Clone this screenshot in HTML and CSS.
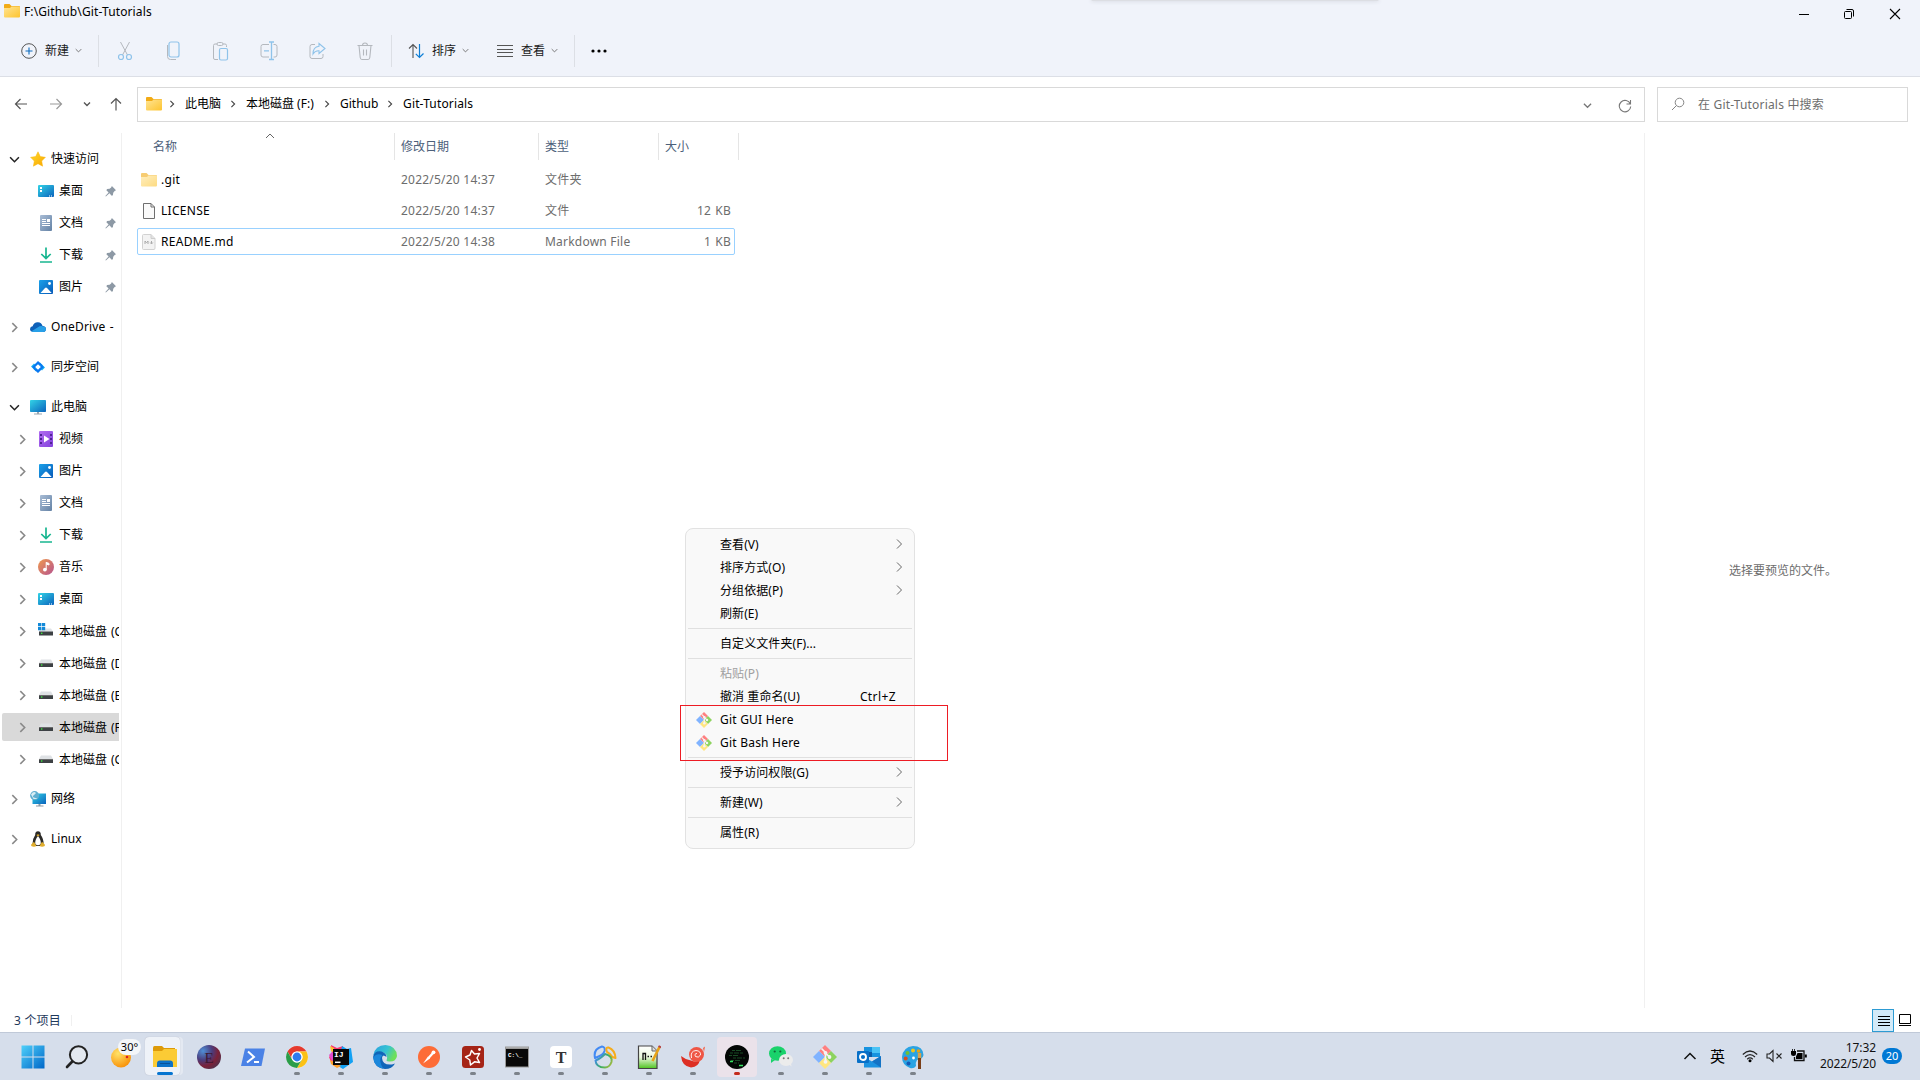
FILE: index.html
```html
<!DOCTYPE html>
<html lang="zh-CN">
<head>
<meta charset="utf-8">
<title>F:\Github\Git-Tutorials</title>
<link rel="stylesheet" href="styles.css">
</head>
<body>
<svg class="defs" width="0" height="0" aria-hidden="true">
  <defs>
    <linearGradient id="gFolder" x1="0" y1="0" x2="1" y2="1"><stop offset="0" stop-color="#ffe494"/><stop offset="1" stop-color="#fdc42f"/></linearGradient>
    <linearGradient id="gBlue" x1="0" y1="0" x2="1" y2="1"><stop offset="0" stop-color="#33d3e6"/><stop offset="1" stop-color="#0a63bd"/></linearGradient>
    <linearGradient id="gDoc" x1="0" y1="0" x2="1" y2="1"><stop offset="0" stop-color="#a9bdd6"/><stop offset="1" stop-color="#6482a5"/></linearGradient>
    <linearGradient id="gPic" x1="0" y1="0" x2="1" y2="1"><stop offset="0" stop-color="#1ba2ea"/><stop offset="1" stop-color="#0759b8"/></linearGradient>
    <linearGradient id="gVid" x1="0" y1="0" x2="1" y2="1"><stop offset="0" stop-color="#b26df0"/><stop offset="1" stop-color="#8241dc"/></linearGradient>
    <linearGradient id="gMus" x1="0" y1="0" x2="1" y2="1"><stop offset="0" stop-color="#f09a4e"/><stop offset="1" stop-color="#b5538f"/></linearGradient>
    <linearGradient id="gStar" x1="0" y1="0" x2="1" y2="1"><stop offset="0" stop-color="#ffdc2e"/><stop offset="1" stop-color="#f9a400"/></linearGradient>
    <linearGradient id="gWin" x1="0" y1="0" x2="1" y2="1"><stop offset="0" stop-color="#4fd0fa"/><stop offset="1" stop-color="#0067c8"/></linearGradient>
    <linearGradient id="gEdge" x1="0" y1="0" x2="1" y2=".4"><stop offset="0" stop-color="#2a9fe0"/><stop offset=".6" stop-color="#35c3d2"/><stop offset="1" stop-color="#6ee05a"/></linearGradient>
    <linearGradient id="gGreen" x1="0" y1="0" x2="0" y2="1"><stop offset="0" stop-color="#fff"/><stop offset=".5" stop-color="#eaf8dc"/><stop offset="1" stop-color="#4fc421"/></linearGradient>
    <linearGradient id="gNav" gradientUnits="userSpaceOnUse" x1="3" y1="12" x2="19" y2="22"><stop offset="0" stop-color="#438af3"/><stop offset=".5" stop-color="#3aae5e"/><stop offset="1" stop-color="#b5bd3c"/></linearGradient>
    <radialGradient id="gSun" cx=".35" cy=".3" r=".8"><stop offset="0" stop-color="#ffe36a"/><stop offset="1" stop-color="#f88a00"/></radialGradient>
    <radialGradient id="gBall" cx=".25" cy=".25" r=".85"><stop offset="0" stop-color="#4f8fd6"/><stop offset=".45" stop-color="#4b3c7c"/><stop offset=".75" stop-color="#7b2037"/><stop offset="1" stop-color="#54304a"/></radialGradient>

    <symbol id="folder" viewBox="0 0 16 16"><path d="M0 2Q0 1 1 1H5.5L7.5 3H15Q16 3 16 4V8H0Z" fill="#f2ab16"/><path d="M0 5H6L7.5 3.5H15.2Q16 3.5 16 4.5V13.4Q16 14.5 15 14.5H1Q0 14.5 0 13.4Z" fill="url(#gFolder)"/></symbol>
    <symbol id="star" viewBox="0 0 16 16"><path d="M8 .8 10.3 5.6 15.4 6.3 11.7 10 12.6 15.2 8 12.7 3.4 15.2 4.3 10 .6 6.3 5.7 5.6Z" fill="url(#gStar)" stroke="#f9b50b" stroke-width=".5"/></symbol>
    <symbol id="desktop" viewBox="0 0 16 16"><rect y="2" width="16" height="12" rx="1" fill="url(#gBlue)"/><path d="M2 4h2v2H2zM2 7h2v2H2zM11 12.4h1v1h-1zM13 12.4h1v1h-1z" fill="#fff"/></symbol>
    <symbol id="doc" viewBox="0 0 16 16"><rect x="2" width="12" height="16" rx="1" fill="url(#gDoc)"/><path d="M4 4.500h4M4 6.500h4M4 8.500h8M4 10.500h8" stroke="#fff"/><rect x="9" y="4" width="3" height="3" fill="#fff"/></symbol>
    <symbol id="down" viewBox="0 0 16 16"><path d="M8 .5V11M3.300 7 8 11.500 12.700 7M2 15H14" fill="none" stroke="#18b690" stroke-width="1.700"/></symbol>
    <symbol id="pic" viewBox="0 0 16 16"><rect x="1" y="1" width="14" height="14" rx="1" fill="url(#gPic)"/><path d="M2.500 14 7 8.900Q8 8 9 8.900L13.700 14Z" fill="#fff"/><circle cx="11.500" cy="4.500" r="1.400" fill="#fff"/></symbol>
    <symbol id="cloud" viewBox="0 0 16 16"><path d="M2.800 12.800Q0 12.500 0 10 .2 7.600 2.600 7.300 4 3 8 3.200 11.500 3.500 12.600 7 16 7.200 16 10.200 15.700 13 13 13Z" fill="#0d60b8"/><path d="M3 13 1.500 12.300 9.600 7.200Q12 6.500 13 7.500 16 7.700 16 10.300 15.700 13 13 13Z" fill="#28a0e8"/></symbol>
    <symbol id="sync" viewBox="0 0 16 16"><path d="M1 7.500 4 4.500 8 8.500 6 12.500ZM15 8.500 12 11.500 8 7.500 10 3.500Z" fill="#18b9f5"/><path d="M8 2 13 6.500 8 6.500 4.500 10 2 8ZM8 14 3 9.500 8 9.500 11.500 6 14 8Z" fill="#0a78f0"/><path d="M8 5.200 10.800 8 8 10.800 5.200 8Z" fill="#fff"/></symbol>
    <symbol id="pc" viewBox="0 0 16 16"><rect y="1" width="16" height="12" rx=".8" fill="url(#gBlue)"/><path d="M7 13h2v1.500h3v1H4v-1h3z" fill="#9aa6b0"/></symbol>
    <symbol id="video" viewBox="0 0 16 16"><rect x="1" width="14" height="16" rx="1" fill="url(#gVid)"/><path d="M2 3h2v2H2zM2 7h2v2H2zM2 11h2v2H2zM12 3h2v2h-2zM12 7h2v2h-2zM12 11h2v2h-2z" fill="#502495"/><path d="M6 4.500V11.500L11.500 8Z" fill="#fff"/></symbol>
    <symbol id="music" viewBox="0 0 16 16"><circle cx="8" cy="8" r="8" fill="url(#gMus)"/><path d="M8.200 3.200V10.500M8.200 3.400 11 4.400V6L8.200 5" fill="#fff" stroke="#fff"/><circle cx="6.900" cy="10.600" r="1.900" fill="#fff"/></symbol>
    <symbol id="drive" viewBox="0 0 16 16"><path d="M3 4.500H13L15 8H1Z" fill="#dfe2e5"/><rect x="1" y="8" width="14" height="4" fill="#3d4144"/><rect x="1" y="8" width="14" height=".8" fill="#777"/><rect x="3" y="9.300" width="1.400" height="1.400" fill="#39e53c"/></symbol>
    <symbol id="sysdrive" viewBox="0 0 16 16"><path d="M3 5.500H13L15 8.500H1Z" fill="#dfe2e5"/><rect x="1" y="8.500" width="14" height="4" fill="#3d4144"/><rect x="3" y="9.600" width="1.400" height="1.400" fill="#39e53c"/><path d="M0 0H3.300V3.300H0ZM3.900 0H7.200V3.300H3.900ZM0 3.900H3.300V7.200H0ZM3.900 3.900H7.200V7.200H3.900Z" fill="#1289d8"/></symbol>
    <symbol id="net" viewBox="0 0 16 16"><rect x="2.500" y="2.500" width="13.500" height="10.500" fill="url(#gBlue)"/><path d="M8.500 13h2v1.500h3v1H6v-1h2.500z" fill="#8c9aa6"/><circle cx="4.600" cy="4.600" r="4.500" fill="#5faed0"/><path d="M1 3.500Q3 .5 5 1.200T4 4 5.500 7 3.500 8Z" fill="#d8edf3"/></symbol>
    <symbol id="tux" viewBox="0 0 16 16"><path d="M8 .3Q11 .3 10.800 4 13.800 8 13.500 13L10 15H6L2.500 13Q2.300 8 5.200 4 5 .3 8 .3Z" fill="#2b2a28"/><path d="M8 5Q11.300 9 10.700 13 8 15.500 5.300 13 4.700 9 8 5Z" fill="#fff"/><path d="M6.300 4 8 3.200 9.700 4 8 5.600ZM1.200 13.500 4 10.700 6.500 15Q4 16.500 1.200 15ZM14.800 13.500 12 10.700 9.500 15Q12 16.500 14.800 15Z" fill="#e0ad2c"/></symbol>
    <symbol id="pin" viewBox="0 0 12 12"><path d="M7.500 0 12 4.500 10.500 5.500 9 7.300 8.600 10 7.300 10.500 4.800 8 1 11.500 .4 10.900 3.900 7.100 1.500 4.700 2.200 3.400 5 3 6.700 1.500Z" fill="#8d99a5"/></symbol>
    <symbol id="cR" viewBox="0 0 10 10"><path d="M3 1 7 5 3 9" fill="none" stroke="currentColor" stroke-width="1.400"/></symbol>
    <symbol id="cM" viewBox="0 0 10 10"><path d="M3 .5 7.500 5 3 9.500" fill="none" stroke="currentColor"/></symbol>
    <symbol id="cD" viewBox="0 0 10 10"><path d="M1 3 5 7 9 3" fill="none" stroke="currentColor" stroke-width="1.400"/></symbol>
    <symbol id="file" viewBox="0 0 16 16"><path d="M2.500 .5H10L13.500 4V15.500H2.500Z" fill="#fafafa" stroke="#6f6f6f"/><path d="M10 .5V4H13.500" fill="none" stroke="#6f6f6f"/></symbol>
    <symbol id="md" viewBox="0 0 16 16"><path d="M2.500 .5H10L14 4.500V14Q14 15.500 13 15.500H2.500Q1.500 15.500 1.500 14.500V1.500Q1.500 .5 2.500 .5Z" fill="#f3f3f3" stroke="#d2d2d2"/><path d="M10 .5V4.500H14" fill="#e2e2e2" stroke="#cdcdcd"/><path d="M4 10V7L5.500 8.700 7 7V10M10.500 7V9.700M9.200 8.500 10.500 10 11.800 8.500" fill="none" stroke="#aaa"/></symbol>
    <symbol id="git" viewBox="0 0 24 24"><path d="M12 0 18 6 12 12 6 6Z" fill="#ff8080"/><path d="M6 6 12 12 6 18 0 12Z" fill="#80b3ff"/><path d="M18 6 24 12 18 18 12 12Z" fill="#8dd35f"/><path d="M12 12 18 18 12 24 6 18Z" fill="#ffe680"/><path d="M8.500 3.500 12.500 7.500V17M12.500 8 16.500 12" stroke="#f4f4f4" stroke-width="1.700" fill="none"/><circle cx="12.500" cy="7.800" r="1.900" fill="#f4f4f4"/><circle cx="16.500" cy="12" r="1.900" fill="#f4f4f4"/><circle cx="12.500" cy="16.800" r="1.900" fill="#f4f4f4"/></symbol>
  </defs>
</svg>

<header class="titlebar">
  <div class="title">
    <svg class="i16"><use href="#folder"/></svg><span class="title-text">F:\Github\Git-Tutorials</span>
    <div class="edge-flyout"></div>
    <div class="winctl">
      <svg viewBox="0 0 12 12"><path d="M1 6.500H11" stroke="#000"/></svg>
      <svg viewBox="0 0 12 12"><rect x="1.500" y="3.500" width="7" height="7" rx="1" fill="none" stroke="#000"/><path d="M3.500 1.500H9Q10.500 1.500 10.500 3V8.500" fill="none" stroke="#000"/></svg>
      <svg viewBox="0 0 12 12"><path d="M1 1 11 11M11 1 1 11" stroke="#000" stroke-width="1.100"/></svg>
    </div>
  </div>
  <nav class="toolbar">
    <button class="tb new"><svg class="i16" viewBox="0 0 16 16"><circle cx="8" cy="8" r="7.300" fill="none" stroke="#555"/><path d="M8 4.500V11.500M4.500 8H11.500" stroke="#0f6cbd" stroke-width="1.100"/></svg><span>新建</span><svg class="i7"><use href="#cD"/></svg></button>
    <i class="vsep"></i>
    <div class="tb-icons">
      <svg viewBox="0 0 20 20"><path d="M5.500 1 12.500 14M14.500 1 7.500 14" stroke="#b4b8be" fill="none"/><circle cx="6" cy="16" r="2.500" fill="none" stroke="#8fc3ea" stroke-width="1.200"/><circle cx="14" cy="16" r="2.500" fill="none" stroke="#8fc3ea" stroke-width="1.200"/></svg>
      <svg viewBox="0 0 20 20"><rect x="6" y="1" width="10" height="15" rx="2" fill="none" stroke="#8fc3ea" stroke-width="1.200"/><path d="M4.500 4V15.500Q4.500 18.500 7.500 18.500H13" fill="none" stroke="#b4b8be"/></svg>
      <svg viewBox="0 0 20 20"><path d="M6 3H4Q2.500 3 2.500 4.500V17Q2.500 18.500 4 18.500H7M12 3H14Q15.500 3 15.500 4.500V6" fill="none" stroke="#b4b8be"/><rect x="6" y="1.500" width="6" height="3" rx="1.500" fill="none" stroke="#b4b8be"/><rect x="8.500" y="7.500" width="8" height="11.500" rx="1.500" fill="none" stroke="#8fc3ea" stroke-width="1.200"/></svg>
      <svg viewBox="0 0 20 20"><path d="M10 3.500H4Q2 3.500 2 5.500V14Q2 16 4 16H10M14.500 3.500H16Q18 3.500 18 5.500V14Q18 16 16 16H14.500" fill="none" stroke="#b4b8be"/><path d="M12.500 1V18.500M10 1H15M10 18.500H15M5 9.800H10" stroke="#8fc3ea" stroke-width="1.300"/></svg>
      <svg viewBox="0 0 20 20"><path d="M8 3.500H5Q3 3.500 3 5.500V15.500Q3 17.500 5 17.500H14Q16 17.500 16 15.500V13" fill="none" stroke="#b4b8be"/><path d="M12 2.500 18 7.500 12 12.500V9.800Q8 9.500 6 13 6 6 12 5.300Z" fill="none" stroke="#8fc3ea" stroke-width="1.100"/></svg>
      <svg viewBox="0 0 20 20"><path d="M2.500 4.500H17.500M7.500 4.500Q7.500 2 10 2T12.500 4.500M4 4.500 5.200 16.500Q5.500 18.500 7 18.500H13Q14.500 18.500 14.800 16.500L16 4.500M8.500 8.500V14.500M11.500 8.500V14.500" fill="none" stroke="#b4b8be" stroke-width="1.100"/></svg>
    </div>
    <i class="vsep"></i>
    <button class="tb sort"><svg class="i16" viewBox="0 0 16 16"><path d="M5 15V1.500M1 5.500 5 1.500 9 5.500" fill="none" stroke="#555" stroke-width="1.100"/><path d="M11.500 1V14.500M7.800 10.800 11.500 14.500 15.500 10.500" fill="none" stroke="#0f7fd6" stroke-width="1.200"/></svg><span>排序</span><svg class="i7"><use href="#cD"/></svg></button>
    <button class="tb view"><svg class="i16" viewBox="0 0 16 16"><path d="M0 2.500H16M0 6.500H16M0 9.500H16M0 13.500H16" stroke="#555"/></svg><span>查看</span><svg class="i7"><use href="#cD"/></svg></button>
    <i class="vsep"></i>
    <svg class="more" viewBox="0 0 16 4"><circle cx="2" cy="2" r="1.600"/><circle cx="8" cy="2" r="1.600"/><circle cx="14" cy="2" r="1.600"/></svg>
  </nav>
</header>

<div class="addressrow">
  <div class="navbtns">
    <svg viewBox="0 0 14 14"><path d="M13 7H1.500M6.500 2 1.500 7 6.500 12" fill="none" stroke="#555" stroke-width="1.200"/></svg>
    <svg viewBox="0 0 14 14"><path d="M1 7H12.500M7.500 2 12.500 7 7.500 12" fill="none" stroke="#999" stroke-width="1.200"/></svg>
    <svg class="sm" viewBox="0 0 10 10"><path d="M2 3.500 5 6.500 8 3.500" fill="none" stroke="#555" stroke-width="1.400"/></svg>
    <svg viewBox="0 0 14 14"><path d="M7 13.500V1.500M2 6.500 7 1.500 12 6.500" fill="none" stroke="#555" stroke-width="1.200"/></svg>
  </div>
  <div class="address">
    <svg class="i16"><use href="#folder"/></svg>
    <svg class="sep"><use href="#cR"/></svg><span class="c1">此电脑</span>
    <svg class="sep"><use href="#cR"/></svg><span class="c2">本地磁盘 (F:)</span>
    <svg class="sep"><use href="#cR"/></svg><span class="c3">Github</span>
    <svg class="sep"><use href="#cR"/></svg><span class="c4">Git-Tutorials</span>
    <svg class="drop"><use href="#cD"/></svg>
    <svg class="refresh" viewBox="0 0 14 14"><path d="M12.300 5A5.700 5.700 0 1 0 12.700 7.500M12.500 1V5H8.500" fill="none" stroke="#777" stroke-width="1.100"/></svg>
  </div>
  <div class="search">
    <svg viewBox="0 0 14 14"><circle cx="8.500" cy="5.500" r="4.300" fill="none" stroke="#858585"/><path d="M5.500 8.500 1 13" stroke="#858585"/></svg>
    <span>在 Git-Tutorials 中搜索</span>
  </div>
</div>

<main class="main">
  <aside class="side">
    <div class="group">
      <div class="n"><svg class="ch open"><use href="#cD"/></svg><svg class="i16"><use href="#star"/></svg><span>快速访问</span></div>
      <div class="n sub"><svg class="ch"></svg><svg class="i16"><use href="#desktop"/></svg><span>桌面</span><svg class="pin"><use href="#pin"/></svg></div>
      <div class="n sub"><svg class="ch"></svg><svg class="i16"><use href="#doc"/></svg><span>文档</span><svg class="pin"><use href="#pin"/></svg></div>
      <div class="n sub"><svg class="ch"></svg><svg class="i16"><use href="#down"/></svg><span>下载</span><svg class="pin"><use href="#pin"/></svg></div>
      <div class="n sub"><svg class="ch"></svg><svg class="i16"><use href="#pic"/></svg><span>图片</span><svg class="pin"><use href="#pin"/></svg></div>
    </div>
    <div class="group"><div class="n"><svg class="ch"><use href="#cR"/></svg><svg class="i16"><use href="#cloud"/></svg><span class="lat">OneDrive -</span></div></div>
    <div class="group"><div class="n"><svg class="ch"><use href="#cR"/></svg><svg class="i16"><use href="#sync"/></svg><span>同步空间</span></div></div>
    <div class="group">
      <div class="n"><svg class="ch open"><use href="#cD"/></svg><svg class="i16"><use href="#pc"/></svg><span>此电脑</span></div>
      <div class="n sub"><svg class="ch"><use href="#cR"/></svg><svg class="i16"><use href="#video"/></svg><span>视频</span></div>
      <div class="n sub"><svg class="ch"><use href="#cR"/></svg><svg class="i16"><use href="#pic"/></svg><span>图片</span></div>
      <div class="n sub"><svg class="ch"><use href="#cR"/></svg><svg class="i16"><use href="#doc"/></svg><span>文档</span></div>
      <div class="n sub"><svg class="ch"><use href="#cR"/></svg><svg class="i16"><use href="#down"/></svg><span>下载</span></div>
      <div class="n sub"><svg class="ch"><use href="#cR"/></svg><svg class="i16"><use href="#music"/></svg><span>音乐</span></div>
      <div class="n sub"><svg class="ch"><use href="#cR"/></svg><svg class="i16"><use href="#desktop"/></svg><span>桌面</span></div>
      <div class="n sub"><svg class="ch"><use href="#cR"/></svg><svg class="i16"><use href="#sysdrive"/></svg><span class="disk">本地磁盘 (C:)</span></div>
      <div class="n sub"><svg class="ch"><use href="#cR"/></svg><svg class="i16"><use href="#drive"/></svg><span class="disk">本地磁盘 (D:)</span></div>
      <div class="n sub"><svg class="ch"><use href="#cR"/></svg><svg class="i16"><use href="#drive"/></svg><span class="disk">本地磁盘 (E:)</span></div>
      <div class="n sub sel"><svg class="ch"><use href="#cR"/></svg><svg class="i16"><use href="#drive"/></svg><span class="disk">本地磁盘 (F:)</span></div>
      <div class="n sub"><svg class="ch"><use href="#cR"/></svg><svg class="i16"><use href="#drive"/></svg><span class="disk">本地磁盘 (G:)</span></div>
    </div>
    <div class="group"><div class="n"><svg class="ch"><use href="#cR"/></svg><svg class="i16"><use href="#net"/></svg><span>网络</span></div></div>
    <div class="group"><div class="n"><svg class="ch"><use href="#cR"/></svg><svg class="i16"><use href="#tux"/></svg><span>Linux</span></div></div>
  </aside>

  <section class="files">
    <div class="cols head"><span class="name">名称<svg class="caret" viewBox="0 0 10 6"><path d="M1 5 5 1 9 5" fill="none" stroke="#666"/></svg></span><span>修改日期</span><span>类型</span><span>大小</span></div>
    <div class="cols row"><span class="fn"><svg class="i16 faded"><use href="#folder"/></svg>.git</span><span>2022/5/20 14:37</span><span>文件夹</span><span class="size"></span></div>
    <div class="cols row"><span class="fn"><svg class="i16"><use href="#file"/></svg>LICENSE</span><span>2022/5/20 14:37</span><span>文件</span><span class="size">12 KB</span></div>
    <div class="cols row focus"><span class="fn"><svg class="i16"><use href="#md"/></svg>README.md</span><span>2022/5/20 14:38</span><span>Markdown File</span><span class="size">1 KB</span></div>
  </section>

  <section class="preview">选择要预览的文件。</section>
</main>

<footer class="status">
  <span>3 个项目</span><i></i>
  <div class="modes">
    <svg class="on" viewBox="0 0 22 23"><rect x=".5" y=".5" width="21" height="22" fill="#d3eaf8" stroke="#2d9bd3"/><path d="M6 7.500H18M6 10.500H18M6 13.500H18M6 16.500H18" stroke="#000"/></svg>
    <svg class="off" viewBox="0 0 14 13"><path d="M1.500 .5H12.500V9.500H1.500ZM1 11.500H13" fill="none" stroke="#000"/></svg>
  </div>
</footer>

<div class="taskbar">
  <div class="apps">
    <div class="app"><svg viewBox="0 0 24 24"><path d="M.5.5H11.500V11.500H.5ZM12.500.5H23.500V11.500H12.500ZM.5 12.500H11.500V23.500H.5ZM12.500 12.500H23.500V23.500H12.500Z" fill="url(#gWin)"/></svg></div>
    <div class="app"><svg viewBox="0 0 24 24"><circle cx="13.500" cy="9.800" r="8.600" fill="#e3e8ef" stroke="#222" stroke-width="2"/><path d="M7.300 16.500 2 22" stroke="#222" stroke-width="2.600" stroke-linecap="round"/></svg></div>
    <div class="app weather"><svg viewBox="0 0 24 24"><circle cx="12" cy="12.500" r="10" fill="url(#gSun)"/><circle cx="18" cy="12" r="1.300" fill="#d22"/></svg><b>30°</b></div>
    <div class="app stack run"><svg viewBox="0 0 24 24"><path d="M0 3Q0 1 1.500 1H9L11 3H22V8H0Z" fill="#dd9a09"/><path d="M0 6H9L11 4H24V22H0Z" fill="#fbcb35"/><path d="M4 22V18.500Q4 15.500 7 15.500H17Q20 15.500 20 18.500V22Z" fill="#0c72c8"/><path d="M7 18.500H17" stroke="#095299"/></svg></div>
    <div class="app"><svg viewBox="0 0 24 24"><circle cx="12" cy="12" r="12" fill="url(#gBall)"/><text x="7.500" y="17.500" class="ball">E</text></svg></div>
    <div class="app"><svg viewBox="0 0 24 24"><path d="M4 3.500H24L20.500 21H0Z" fill="#4b82e6"/><path d="M7 6.500 13 12 6 17.500M13 17H18" fill="none" stroke="#fff" stroke-width="2"/></svg></div>
    <div class="app run"><svg viewBox="0 0 24 24"><circle cx="12" cy="12" r="11" fill="#fff"/><path d="M2.500 6.500A11 11 0 0 1 21.500 6.500H12A5.500 5.500 0 0 0 7.200 14.700Z" fill="#e53a2e"/><path d="M21.500 6.500A11 11 0 0 1 12 23L16.800 14.700A5.500 5.500 0 0 0 12 6.500Z" fill="#fbc116"/><path d="M2.500 6.500 7.200 14.700A5.500 5.500 0 0 0 16.800 14.700L12 23A11 11 0 0 1 2.500 6.500Z" fill="#2a9d48"/><circle cx="12" cy="12" r="5.500" fill="#fff"/><circle cx="12" cy="12" r="4.400" fill="#2f7bf0"/></svg></div>
    <div class="app run"><svg viewBox="0 0 24 24"><path d="M2 0 8 3 14 1 13 12 2 17 0 12 3 9Z" fill="#fc3470"/><path d="M1 1 5 3 6 8 2 6Z" fill="#fdc22f"/><path d="M0 10 3 7 8 12 3 16Z" fill="#e34bd0"/><path d="M13 1 18 4 22 3 24 17 14 24 9 21Z" fill="#12a1f4"/><path d="M1 15 6 17 12 21 8 23 2 19Z" fill="#ffa02b"/><rect x="4" y="4" width="16" height="16" fill="#080808"/><text x="5" y="12" class="ij">IJ</text><path d="M6 17.300H11.500" stroke="#fff" stroke-width="1.500"/></svg></div>
    <div class="app run"><svg viewBox="0 0 24 24"><path d="M.2 10.500Q2 0 12.500 0 23.500 1 24 11 23 17 16 16.500 12.500 16.500 14 14 15 9 9.500 7 3 6.500.2 10.500Z" fill="url(#gEdge)"/><path d="M.1 12Q1 5.500 8.500 6.500 13.500 8 13.500 12 9.500 8.500 9 13 9.500 20.500 19 19.500L22 18.500Q19 24 12 24 1 23 .1 12Z" fill="#1065b8"/><path d="M9.500 10Q4.500 15 10.500 23.900 1 22 .2 12.500 3.500 7.500 9.500 10Z" fill="#1b87db"/></svg></div>
    <div class="app run"><svg viewBox="0 0 24 24"><circle cx="12" cy="12" r="11" fill="#fd6c37"/><path d="M6 18.500 11 11.500 13 13.500Z" fill="#fff"/><path d="M11.500 13 16 8" stroke="#fff" stroke-width="2.200"/><circle cx="16.500" cy="7.300" r="1.900" fill="#fff"/></svg></div>
    <div class="app run"><svg viewBox="0 0 24 24"><rect x="1" y="1" width="22" height="22" rx="3.500" fill="#a52416"/><path d="M10.500 5.500 13.500 9 18.500 8.500 16 13 18.500 17.500 13.500 16.800 9.500 20 8.800 15 4.500 12 9 10Z" fill="none" stroke="#fff" stroke-width="1.500" stroke-linejoin="round"/><circle cx="18.500" cy="4.500" r="1.400" fill="#fff"/></svg></div>
    <div class="app run"><svg viewBox="0 0 24 24"><rect x=".5" y="2" width="23" height="20" fill="#090909" stroke="#999"/><path d="M1 3H23" stroke="#ccc" stroke-width="1.500"/><text x="3" y="11.500" class="cmd">C:\_</text></svg></div>
    <div class="app run"><svg viewBox="0 0 24 24"><rect x="1" y="1" width="22" height="22" rx="4" fill="#fff"/><text x="12" y="17.500" text-anchor="middle" class="typ">T</text></svg></div>
    <div class="app run"><svg viewBox="0 0 24 24" fill="none" stroke-width="2" stroke-linejoin="round"><path d="M5.500 11.500 2 13Q0 4 9 1.500 12.500 2 11.500 6 10.500 9.500 5.500 11.500Z" stroke="#438af3"/><path d="M14 7Q12 2 15.500 2.500 22 5 22.500 13L19.500 12Q17 8.500 14 7Z" stroke="#f6ac1c"/><path d="M12 9Q20 11 18.500 17 16.500 22.500 12 22.500 3 22.500 2.500 15.500 7 14 12 9Z" stroke="url(#gNav)"/></svg></div>
    <div class="app run"><svg viewBox="0 0 24 24"><path d="M1.500 1H15L20 6V23.500H1.500Z" fill="url(#gGreen)" stroke="#444" stroke-width="1.200"/><path d="M15 1V6H20" fill="#ddd" stroke="#666"/><path d="M6 15V8.500H8.500V15M10.500 11.500H12M13.500 11.500H15" stroke="#111" stroke-width="1.300" fill="none"/><path d="M22.500 2 15.500 16" stroke="#e7a317" stroke-width="2.600"/><path d="M21.500 1 24 2.500" stroke="#b64545" stroke-width="2"/></svg></div>
    <div class="app run"><svg viewBox="0 0 24 24"><path d="M0 11Q5 15 10 15.500 16 18 19 14 18 22 10 22.500 1 21.500 0 11Z" fill="#dd2f24"/><circle cx="15.500" cy="9.500" r="7.500" fill="#ef5645"/><path d="M22 3 24 1.500 23 7Z" fill="#f4654b"/><path d="M10.500 13Q9 6 15 5.500 20 6 19.500 10 17.500 13.500 14.500 11.500 13 8.500 16 8.500" fill="none" stroke="#fff" stroke-width=".9"/></svg></div>
    <div class="app run alert"><svg viewBox="0 0 24 24"><circle cx="12" cy="12" r="12" fill="#030604"/><path d="M7 5.500H17M5 8H18M4 10.500H14M8 13H20M6 15.500H16M9 18H14" stroke="#194b25" stroke-dasharray="3 1 5 1"/><path d="M14 20.500H18M5 16.500H8" stroke="#36e260" stroke-width="1.300"/></svg></div>
    <div class="app run"><svg viewBox="0 0 24 24"><ellipse cx="8.500" cy="8.500" rx="8.500" ry="7.300" fill="#19d26b"/><path d="M2 14 2 18 6 15Z" fill="#19d26b"/><circle cx="5.700" cy="6.500" r="1.100" fill="#10663a"/><circle cx="11.300" cy="6.500" r="1.100" fill="#10663a"/><ellipse cx="17" cy="15" rx="7" ry="6" fill="#ececec"/><path d="M20 19.500 22.500 21.500 22 18Z" fill="#ececec"/><circle cx="14.700" cy="13.300" r="1" fill="#777"/><circle cx="19.200" cy="13.300" r="1" fill="#777"/></svg></div>
    <div class="app run"><svg><use href="#git"/></svg></div>
    <div class="app run"><svg viewBox="0 0 24 24"><path d="M7 2H23V12H7Z" fill="#1793df"/><path d="M15 2H23V8H15Z" fill="#4ac3f5"/><path d="M7 7H15V12H7Z" fill="#0a5ca8"/><path d="M7 12 15 16.500 24 11V22.500H7Z" fill="#1c92e0"/><path d="M15 16.500 24 22.500V11Z" fill="#1473c5"/><rect y="6" width="12" height="12" rx="1" fill="#0870c8"/><circle cx="6" cy="12" r="3" fill="none" stroke="#fff" stroke-width="1.900"/></svg></div>
    <div class="app run"><svg viewBox="0 0 24 24"><path d="M12 1Q22 1 22.500 10 22 14 16 15 14 18 15 21 13 24 9 23 1 20 1 12 2 2 12 1Z" fill="#2aa3e3"/><circle cx="12" cy="5.500" r="2" fill="#f0c51c"/><circle cx="6.500" cy="8" r="2" fill="#72bf32"/><circle cx="4.700" cy="13.500" r="2" fill="#d84d20"/><circle cx="7.500" cy="18.500" r="2" fill="#1558b5"/><circle cx="17.500" cy="6" r="1.800" fill="#e3a417"/><circle cx="12.500" cy="13" r="1.400" fill="#fff"/><path d="M18.500 8V15" stroke="#dca24c" stroke-width="3.400"/><path d="M18.500 13V24" stroke="#7a3f18" stroke-width="3"/></svg></div>
  </div>
  <div class="tray">
    <svg class="up" viewBox="0 0 14 14"><path d="M1.500 10 7 4.500 12.500 10" fill="none" stroke="#111" stroke-width="1.500"/></svg>
    <span class="ime">英</span>
    <svg class="t16" viewBox="0 0 16 16"><path d="M.8 6.500Q8-.5 15.200 6.500M3 9Q8 4.300 13 9M5.200 11.200Q8 8.700 10.800 11.200" fill="none" stroke="#222" stroke-width="1.200"/><circle cx="8" cy="12.800" r="1.500"/></svg>
    <svg class="t16 snd" viewBox="0 0 16 16"><path d="M1 6H3.500L7 2.500V13.500L3.500 10H1ZM10.500 5.500 15.500 10.500M15.500 5.500 10.500 10.500" fill="none" stroke="#222" stroke-width="1.100"/></svg>
    <svg class="t16" viewBox="0 0 16 16"><path d="M6 3H13V12.500H3.500V9" fill="none" stroke="#111" stroke-width="1.300"/><path d="M6.500 5H11.500V11H5V8.500ZM13.800 6.500H15.800V9.500H13.800ZM0 3H5V6Q5 8 2.500 8T0 6ZM1 1H1.800V3H1ZM3.200 1H4V3H3.200Z"/></svg>
    <div class="clock"><span>17:32</span><span>2022/5/20</span></div>
    <span class="badge">20</span>
  </div>
</div>

<div class="menu">
  <div class="mi"><span>查看(V)</span><svg><use href="#cM"/></svg></div>
  <div class="mi"><span>排序方式(O)</span><svg><use href="#cM"/></svg></div>
  <div class="mi"><span>分组依据(P)</span><svg><use href="#cM"/></svg></div>
  <div class="mi"><span>刷新(E)</span></div>
  <hr>
  <div class="mi"><span>自定义文件夹(F)...</span></div>
  <hr>
  <div class="mi off"><span>粘贴(P)</span></div>
  <div class="mi"><span>撤消 重命名(U)</span><em>Ctrl+Z</em></div>
  <div class="mi git"><svg class="i16"><use href="#git"/></svg><span>Git GUI Here</span></div>
  <div class="mi git"><svg class="i16"><use href="#git"/></svg><span>Git Bash Here</span></div>
  <hr>
  <div class="mi"><span>授予访问权限(G)</span><svg><use href="#cM"/></svg></div>
  <hr>
  <div class="mi"><span>新建(W)</span><svg><use href="#cM"/></svg></div>
  <hr>
  <div class="mi"><span>属性(R)</span></div>
</div>
<div class="callout"></div>
</body>
</html>
```
FILE: styles.css
```css
* { box-sizing: border-box; }
html, body { margin: 0; }
body {
  width: 1920px; height: 1080px; overflow: hidden;
  display: flex; flex-direction: column;
  background: #fff; color: #000;
  font: 12px/16px "Noto Sans", "Noto Sans CJK SC", sans-serif;
  white-space: nowrap;
}
svg { display: block; flex: none; }
.defs { position: absolute; }
.i16 { width: 16px; height: 16px; }
.i7 { width: 7px; height: 7px; color: #777; }

/* Title bar and command bar */
.titlebar { flex: none; height: 77px; background: #f0f3fa; border-bottom: 1px solid #dcdfe6; }
.title { display: flex; align-items: flex-start; height: 25px; padding: 3px 0 0 4px; gap: 4px; }
.title-text { width: 1063px; margin-top: 1px; letter-spacing: .12px; }
.edge-flyout { width: 288px; height: 2px; margin-top: -4px; background: #dcdee3; box-shadow: 0 0 4px #c8ccd4; border-radius: 0 0 4px 4px; }
.winctl { display: flex; gap: 34px; margin: 5px 19px 0 auto; }
.winctl svg { width: 12px; height: 12px; }
.winctl svg:first-child { margin-right: -1px; }
.toolbar { display: flex; align-items: center; height: 51px; padding-left: 20px; }
.tb { display: flex; align-items: center; padding: 0; border: 0; background: none; font: inherit; color: #1a1a1a; }
.tb span { width: 24px; margin: 0 6px 0 8px; }
.new { width: 77px; margin-left: 1px; }
.vsep { width: 1px; height: 32px; background: #dcdfe5; }
.tb-icons { display: flex; gap: 28px; width: 292px; padding-left: 16px; }
.tb-icons svg { width: 20px; height: 20px; }
.sort { width: 89px; margin-left: 16px; }
.view { width: 77px; }
.more { width: 16px; height: 4px; margin-left: 16px; }

/* Address row */
.addressrow { flex: none; display: flex; align-items: center; height: 56px; padding-bottom: 2px; }
.navbtns { display: flex; align-items: center; width: 137px; padding-left: 14px; }
.navbtns svg { width: 14px; height: 14px; margin-right: 21px; }
.navbtns .sm { width: 10px; height: 10px; margin: 0 17px 0 -2px; }
.address { display: flex; align-items: center; width: 1508px; height: 35px; padding-left: 8px; border: 1px solid #d9d9d9; }
.address .sep { width: 8px; height: 8px; color: #444; }
.address .i16 { margin-right: 6px; }
.address span { margin: 0 8px 0 9px; }
.c1 { width: 36px; } .c2 { width: 69px; } .c3 { width: 38px; } .c4 { width: 72px; letter-spacing: .15px; }
.address .c2 { margin-right: 8px; }
.drop { width: 9px; height: 9px; margin: 3px 26px 0 auto; color: #777; }
.refresh { width: 14px; height: 14px; margin: 3px 12px 0 0; }
.search { display: flex; align-items: center; width: 251px; height: 35px; margin-left: 12px; padding-left: 14px; gap: 13px; border: 1px solid #d9d9d9; color: #6d6d6d; letter-spacing: .18px; }
.search svg { width: 14px; height: 14px; margin: -1px 0 0 -1px; }
.search span { margin-top: 1px; }

/* Body panes */
.main { flex: none; display: flex; height: 875px; }
.side { width: 122px; padding-top: 10px; border-right: 1px solid #f0f0f0; }
.group { margin-bottom: 8px; }
.n { display: flex; align-items: center; width: 119px; height: 32px; padding-left: 9px; overflow: hidden; }
.n .ch { width: 11px; height: 11px; margin-right: 10px; color: #888; }
.n .open { color: #222; }
.n .i16 { margin-right: 5px; }
.n.sub { padding-left: 17px; }
.n .pin { width: 11px; height: 11px; margin-left: auto; margin-right: 3px; }
.n.sel { height: 28px; width: 117px; margin: 2px 0 2px 2px; padding-left: 15px; background: #d9d9d9; border-radius: 2px 0 0 2px; }
.lat { letter-spacing: .15px; word-spacing: 1px; }
.disk { word-spacing: .8px; padding-top: 1px; }

.files { width: 1522px; padding-left: 15px; }
.cols { display: grid; grid-template-columns: 258px 144px 120px 80px; align-items: center; }
.head { height: 27px; color: #4c607a; }
.head span { height: 27px; padding: 6px 0 0 6px; border-right: 1px solid #e5e5e5; }
.head .name { display: flex; padding-left: 16px; }
.caret { width: 10px; height: 6px; margin: -6px 0 0 88px; }
.row { width: 598px; height: 27px; margin-top: 4px; border: 1px solid transparent; border-radius: 2px; color: #6d6d6d; letter-spacing: .22px; grid-template-columns: 256px 144px 120px 73px; }
.head + .row { margin-top: 6px; }
.row span { padding-left: 7px; }
.row .fn { display: flex; align-items: center; gap: 4px; padding-left: 3px; color: #000; letter-spacing: .3px; }
.row .size { text-align: right; padding: 0; word-spacing: .8px; }
.faded { opacity: .6; }
.focus { border-color: #99d1ff; }
.preview { display: flex; flex: 1; align-items: center; padding-left: 84px; border-left: 1px solid #f0f0f0; color: #6d6d6d; }

.status { flex: none; display: flex; align-items: center; height: 24px; padding-left: 14px; color: #1e395b; }
.status > span { width: 57px; padding-top: 2px; letter-spacing: .2px; }
.status i { width: 1px; height: 11px; background: #f0f0f0; }
.modes { display: flex; align-items: center; gap: 4px; margin-left: auto; padding-right: 8px; }
.on { width: 22px; height: 23px; }
.off { width: 14px; height: 13px; }

/* Taskbar */
.taskbar { flex: none; display: flex; height: 48px; background: #d6deeb; border-top: 1px solid #c0c9d8; }
.apps { display: flex; padding-left: 11px; }
.app { position: relative; display: flex; width: 44px; height: 47px; align-items: center; justify-content: center; }
.app svg { position: relative; width: 24px; height: 24px; }
.run::after { content: ""; position: absolute; left: 19px; bottom: 5px; width: 6px; height: 3px; border-radius: 2px; background: #7c828a; }
.stack::before { content: ""; position: absolute; left: 2px; top: 4px; width: 35px; height: 38px; border-radius: 4px; background: #eef2f8; box-shadow: 0 0 1px #aab, 3px 0 0 #e4e9f2; }
.stack::after { left: 14px; width: 16px; background: #0675d0; }
.alert::before { content: ""; position: absolute; left: 2px; top: 4px; width: 40px; height: 40px; border-radius: 4px; background: #ebe2ea; }
.alert::after { background: #c42b1c; }
.weather b { position: absolute; left: 19px; top: 6px; width: 23px; height: 16px; border-radius: 8px; background: #f4f6f9; font-weight: 400; font-size: 11px; line-height: 15px; text-align: center; }
.ball { font: 15px "Liberation Serif", serif; fill: #3e1730; }
.ij { font: bold 8px "Liberation Mono", monospace; fill: #fff; }
.cmd { font: bold 6px "Liberation Mono", monospace; fill: #fff; }
.typ { font: bold 16px "Liberation Serif", serif; fill: #333; }
.tray { display: flex; align-items: center; margin-left: auto; padding-right: 18px; }
.up { width: 14px; height: 14px; margin: -2px 13px 0 0; }
.ime { width: 16px; margin: -2px 16px 0 0; font-size: 15px; }
.t16 { width: 16px; height: 16px; margin: -2px 8px 0 0; }
.snd { margin-right: 9px; }
.clock { display: flex; flex-direction: column; width: 61px; margin: -1px 6px 0 0; align-items: flex-end; color: #111; letter-spacing: -.1px; }
.badge { width: 20px; height: 16px; margin-top: -1px; border-radius: 8px; background: #0078d4; color: #fff; font-size: 11px; text-align: center; }

/* Context menu floating over the file list */
.menu { position: absolute; left: 685px; top: 528px; width: 230px; height: 321px; padding: 4px 2px; background: #f9f9f9; border: 1px solid #e2e2e2; border-radius: 8px; }
.mi { display: flex; align-items: center; height: 23px; padding: 0 8px 0 32px; }
.mi span { letter-spacing: .08px; }
.mi svg:last-child { width: 10px; height: 10px; margin: -2px 0 0 auto; color: #666; }
.mi.git { padding-left: 8px; }
.mi.git span { letter-spacing: .22px; }
.mi.git .i16 { margin-right: 8px; }
.mi.off { color: #a0a0a0; }
.mi em { margin: 0 8px 0 auto; font-style: normal; letter-spacing: .4px; }
.menu hr { height: 1px; margin: 3px 0; border: 0; background: #e0e0e0; }
.callout { position: absolute; left: 680px; top: 705px; width: 268px; height: 56px; border: 1px solid #ed1c24; }
```
